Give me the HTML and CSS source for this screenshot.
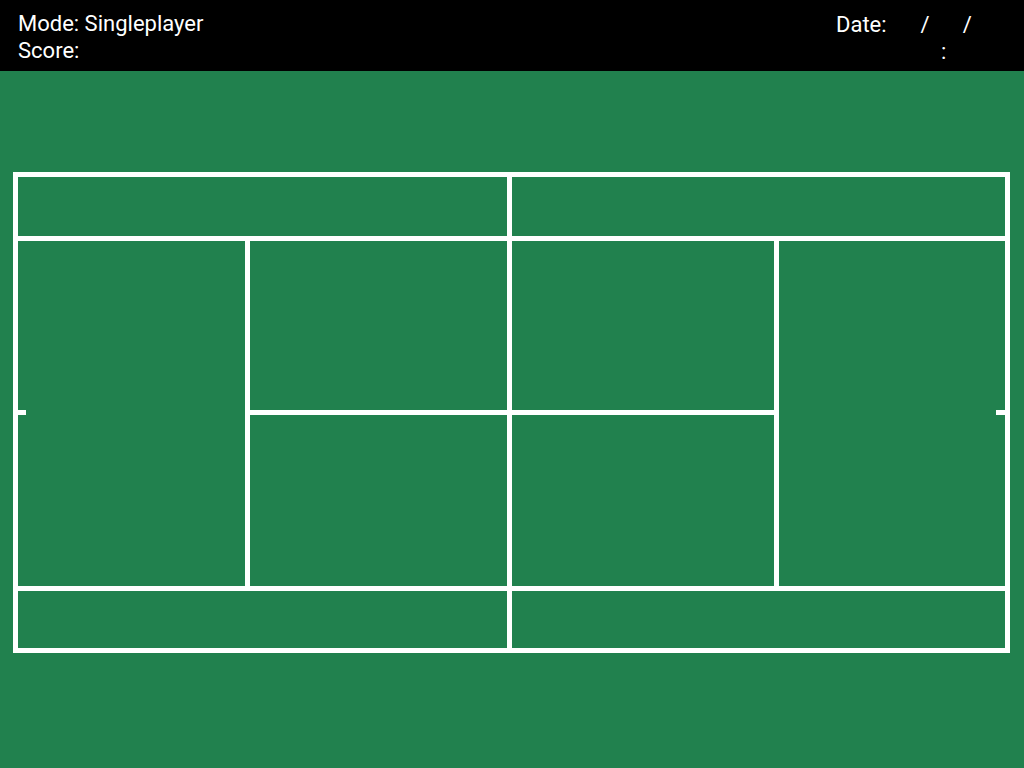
FILE: index.html
```html
<!DOCTYPE html>
<html lang="en">
<head>
<meta charset="utf-8">
<title>Tennis</title>
<link rel="stylesheet" href="styles.css">
</head>
<body>
<header class="topbar">
  <div class="info">
    <div class="line">Mode: Singleplayer</div>
    <div class="line">Score:</div>
  </div>
  <div class="clock">
    <div class="line">Date:<span class="field f-day"></span>/<span class="field f-month"></span>/<span class="field f-year"></span></div>
    <div class="line"><span class="field f-hour"></span>:<span class="field f-min"></span></div>
  </div>
</header>
<main class="field-area">
  <div class="court">
    <div class="cell alley-tl"></div>
    <div class="cell alley-tr"></div>
    <div class="cell back-left"><span class="mark mark-left"></span></div>
    <div class="cell box-a"></div>
    <div class="cell box-b"></div>
    <div class="cell back-right"><span class="mark mark-right"></span></div>
    <div class="cell box-c"></div>
    <div class="cell box-d"></div>
    <div class="cell alley-bl"></div>
    <div class="cell alley-br"></div>
  </div>
</main>
</body>
</html>
```
FILE: styles.css
```css
* { box-sizing: border-box; }
html, body {
  margin: 0;
  padding: 0;
  height: 100%;
}
body {
  background: #21814e;
  font-family: Roboto, "Liberation Sans", sans-serif;
  color: #fff;
  overflow: hidden;
}
.topbar {
  height: 71px;
  background: #000;
  display: flex;
  justify-content: space-between;
  align-items: flex-start;
  padding: 10px 38px 0 18px;
  font-size: 22px;
}
.line {
  line-height: 27px;
  white-space: nowrap;
}
.clock {
  width: 150px;
  margin-top: 1px;
}
.field {
  display: inline-block;
  width: 33px;
}
.f-day { width: 34px; }
.f-hour { width: 105px; }
.f-min { width: 20px; }
.field-area {
  padding: 101px 0 0 13px;
  display: flex;
}
.court {
  width: 997px;
  height: 481px;
  background: #fff;
  padding: 5px;
  display: grid;
  grid-template-columns: 227px 257px 262px 226px;
  grid-template-rows: 59px 169px 171px 57px;
  gap: 5px;
}
.cell {
  background: #21814e;
  position: relative;
}
.alley-tl { grid-column: 1 / 3; grid-row: 1; }
.alley-tr { grid-column: 3 / 5; grid-row: 1; }
.back-left { grid-column: 1; grid-row: 2 / 4; }
.back-right { grid-column: 4; grid-row: 2 / 4; }
.box-a { grid-column: 2; grid-row: 2; }
.box-b { grid-column: 3; grid-row: 2; }
.box-c { grid-column: 2; grid-row: 3; }
.box-d { grid-column: 3; grid-row: 3; }
.alley-bl { grid-column: 1 / 3; grid-row: 4; }
.alley-br { grid-column: 3 / 5; grid-row: 4; }
.mark {
  position: absolute;
  top: 169px;
  height: 5px;
  background: #fff;
}
.mark-left { left: 0; width: 8px; }
.mark-right { right: 0; width: 9px; }
```
